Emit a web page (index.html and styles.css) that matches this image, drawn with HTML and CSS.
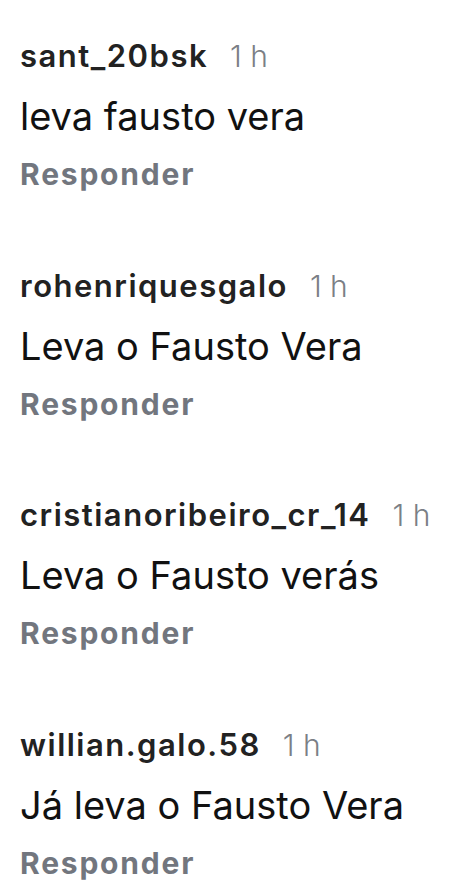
FILE: index.html
```html
<!DOCTYPE html>
<html lang="pt-BR">

<head>
    <meta charset="UTF-8">
    <meta name="viewport" content="width=device-width, initial-scale=1.0">
    <title>Comentários</title>
    <link rel="stylesheet" href="styles.css">
</head>

<body>
    <ul class="comments">
        <li class="comment">
            <div class="meta"><span class="user">sant_20bsk</span><span class="time">1 h</span></div>
            <p class="text">leva fausto vera</p>
            <a class="reply" href="#">Responder</a>
        </li>
        <li class="comment">
            <div class="meta"><span class="user">rohenriquesgalo</span><span class="time">1 h</span></div>
            <p class="text">Leva o Fausto Vera</p>
            <a class="reply" href="#">Responder</a>
        </li>
        <li class="comment">
            <div class="meta"><span class="user">cristianoribeiro_cr_14</span><span class="time">1 h</span></div>
            <p class="text">Leva o Fausto verás</p>
            <a class="reply" href="#">Responder</a>
        </li>
        <li class="comment">
            <div class="meta"><span class="user">willian.galo.58</span><span class="time">1 h</span></div>
            <p class="text">Já leva o Fausto Vera</p>
            <a class="reply" href="#">Responder</a>
        </li>
    </ul>
</body>

</html>
```

FILE: styles.css
```css
* {
    margin: 0;
    padding: 0;
    box-sizing: border-box;
    text-decoration: none;
}

body {
    background: #fff;
    font-family: Inter, Roboto, sans-serif;
}

.comments {
    list-style: none;
    padding: 27px 20px 0;
}

.comment {
    display: flex;
    flex-direction: column;
    margin-bottom: 53.8px;
}

.meta {
    display: flex;
    align-items: baseline;
    gap: 22px;
    line-height: 58px;
}

.user {
    font-size: 31px;
    font-weight: 600;
    letter-spacing: 1.5px;
    color: #222;
}

.time {
    font-size: 30px;
    font-weight: 300;
    color: #7b7f86;
}

.text {
    font-size: 38px;
    line-height: 62.4px;
    color: #111;
}

.reply {
    font-size: 30px;
    font-weight: 700;
    letter-spacing: 1.8px;
    line-height: 55.3px;
    color: #72767e;
}
```
